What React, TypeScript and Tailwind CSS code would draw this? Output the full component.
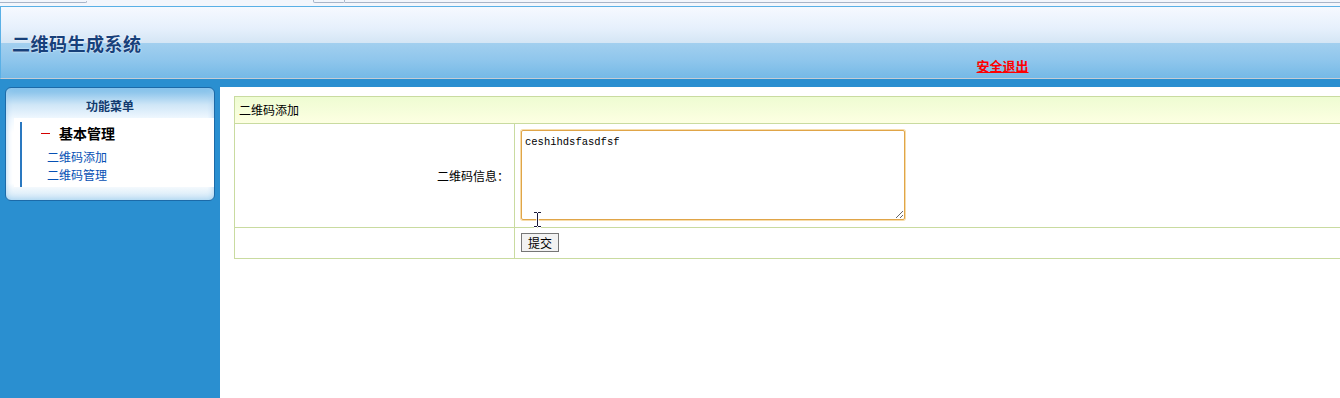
import { useState } from 'react'

const cjk = { fontFamily: '"Noto Sans CJK SC", "Liberation Sans", sans-serif' }

function TopStrip() {
  return (
    <div className="relative h-[6px] bg-[#f3f6fc]">
      <div className="absolute left-0 top-[1px] h-[2px] w-[87px] border-b border-r border-[#a8b4c8] rounded-br-[3px]" />
      <div className="absolute left-[313px] top-0 h-[3px] w-[32px] border-x border-b border-[#a8b4c8] rounded-b-[2px]" />
      <div className="absolute left-[345px] right-0 top-[1px] h-[2px] border-b border-[#a8b4c8]" />
    </div>
  )
}

function Header() {
  return (
    <div className="flex h-[73px] border-t border-l border-t-[#5ab0e6] border-l-[#5ab0e6] border-b border-b-[#c4ccd6] bg-[linear-gradient(to_bottom,#f6f9ff_0%,#e6f0fc_30%,#d5e6f5_50%,#a2cfef_51%,#8fc6ec_75%,#75b9e6_100%)]">
      <div
        className="pl-[11px] pt-[26px] text-[18px] leading-[20px] font-bold text-[#17407a] tracking-[0.5px] [text-shadow:0_0_2px_#ffffff]"
        style={cjk}
      >
        二维码生成系统
      </div>
      <a
        href="#"
        className="ml-[835px] pt-[51px] text-[13px] leading-[16px] font-bold text-[#ff0000] underline"
        style={cjk}
      >
        安全退出
      </a>
    </div>
  )
}

function Sidebar() {
  return (
    <div className="w-[220px] shrink-0 pl-[5px]">
      <div className="h-[114px] w-[210px] rounded-[6px] border border-[#1c6aa8] bg-[linear-gradient(to_bottom,#79bbe8_0%,#cfe6f7_15%,#f2f9ff_28%,#ffffff_40%,#ffffff_85%,#cfe6f7_100%)] shadow-[inset_0_0_6px_#9fcff0]">
        <div className="pt-[10px] text-center text-[12px] leading-[16px] font-bold text-[#113a6e]" style={cjk}>
          功能菜单
        </div>
        <div className="mt-[4px] ml-[8px] h-[69px] bg-white pl-[6px] pt-[4px]">
          <div className="h-[65px] border-l-2 border-[#2a78c0]">
            <div className="flex items-center pl-[19px] pt-[2px]">
              <span className="h-[1px] w-[9px] bg-[#d40000]" />
              <span className="ml-[9px] text-[14px] leading-[18px] font-bold text-black" style={cjk}>
                基本管理
              </span>
            </div>
            <div className="pl-[25px] pt-[6px] text-[12px] leading-[18px] text-[#0650b4]" style={cjk}>
              <div>二维码添加</div>
              <div>二维码管理</div>
            </div>
          </div>
        </div>
      </div>
    </div>
  )
}

function IBeam() {
  return (
    <svg className="pointer-events-none absolute left-[533px] top-[211px]" width="9" height="17" viewBox="0 0 9 17">
      <path d="M1 1h3M5 1h3M4.5 1v15M1 16h3M5 16h3" stroke="#ffffff" strokeWidth="2.5" fill="none" />
      <path d="M1 1.5h3M5 1.5h3M4.5 2v13M1 15.5h3M5 15.5h3" stroke="#1a1a3a" strokeWidth="1" fill="none" />
    </svg>
  )
}

function AddForm() {
  const [text, setText] = useState('ceshihdsfasdfsf')

  return (
    <div className="flex-1 overflow-hidden bg-white pl-[14px] pt-[9px]">
      <div className="w-[1120px] border border-[#c9dba0]" style={cjk}>
        <div className="h-[27px] border-b border-[#c9dba0] bg-[linear-gradient(to_bottom,#eefcd2,#fdffe2)] pl-[4px] text-[12px] leading-[26px] text-black">
          二维码添加
        </div>
        <div className="flex h-[104px] border-b border-[#c9dba0]">
          <div className="flex w-[280px] items-center justify-end border-r border-[#c9dba0] pr-[5px] text-[12px] text-black">
            二维码信息：
          </div>
          <div className="pl-[6px] pt-[6px]">
            <textarea
              value={text}
              onChange={(e) => setText(e.target.value)}
              className="block h-[90px] w-[384px] resize rounded-[2px] border border-[#e0a548] px-[3px] py-[4px] text-[10.5px] leading-[14px] text-black outline-none shadow-[0_0_0_1px_#f7dcaa]"
              style={{ fontFamily: '"Liberation Mono", monospace' }}
            />
          </div>
        </div>
        <div className="flex h-[30px]">
          <div className="w-[280px] border-r border-[#c9dba0]" />
          <div className="pl-[6px] pt-[5px]">
            <button className="block h-[19px] w-[38px] border border-[#767676] bg-[#f2f2f2] text-[12px] leading-[16px] text-black">
              提交
            </button>
          </div>
        </div>
      </div>
    </div>
  )
}

export default function App() {
  return (
    <div className="relative h-[398px] w-[1340px] overflow-hidden bg-[#2a8fd0]">
      <TopStrip />
      <Header />
      <div className="flex h-[319px] pt-[8px]">
        <Sidebar />
        <AddForm />
      </div>
      <IBeam />
    </div>
  )
}
